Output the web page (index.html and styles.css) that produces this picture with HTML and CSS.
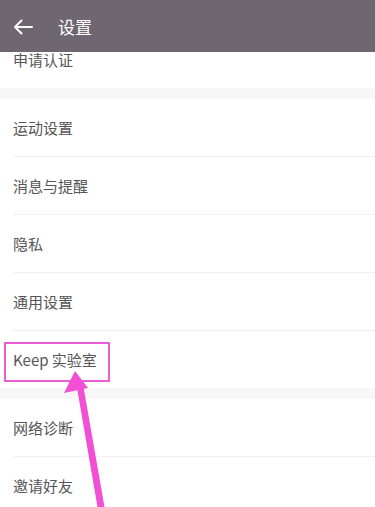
FILE: index.html
```html
<!DOCTYPE html>
<html lang="zh-CN">
<head>
  <meta charset="UTF-8">
  <title>设置</title>
  <link rel="stylesheet" href="styles.css">
</head>
<body>
  <!-- 顶部标题栏，盖在滚动列表上 -->
  <header class="topbar">
    <svg class="back" width="20" height="16" viewBox="0 0 20 16">
      <path d="M19 8H2M8.5 1.5L2 8l6.5 6.5" fill="none" stroke="#fff" stroke-width="2" stroke-linecap="round" stroke-linejoin="round"/>
    </svg>
    <span class="title">设置</span>
  </header>

  <main class="settings">
    <div class="group">
      <div class="row">申请认证</div>
    </div>
    <div class="group">
      <div class="row">运动设置</div>
      <div class="row">消息与提醒</div>
      <div class="row">隐私</div>
      <div class="row">通用设置</div>
      <div class="row">Keep 实验室<span class="mark"></span></div>
    </div>
    <div class="group">
      <div class="row">网络诊断</div>
      <div class="row">邀请好友</div>
    </div>
  </main>

  <!-- 标注箭头 -->
  <svg class="pointer" width="375" height="507" viewBox="0 0 375 507">
    <path d="M77 388 L83.5 387 L104.5 507 L97.5 507 Z" fill="#f24fd4"/>
    <path d="M75 371 L88 388 L64 393 Z" fill="#f24fd4"/>
  </svg>
</body>
</html>
```

FILE: styles.css
```css
body {
  margin: 0;
  background-color: #fff;
  font-family: "Noto Sans CJK SC", "Noto Sans", sans-serif;
  color: #555;
  overflow: hidden;
  height: 507px;
  position: relative;
}
.topbar {
  position: fixed;
  top: 0;
  left: 0;
  right: 0;
  height: 52px;
  background-color: #6e6771;
  display: flex;
  align-items: center;
  z-index: 2;
}
.back {
  margin-left: 13px;
  margin-top: 1px;
}
.title {
  margin-left: 25px;
  color: #fff;
  font-size: 17px;
}
.settings {
  padding-top: 31px;
}
.group {
  border-bottom: 11px solid #f7f7f7;
}
.group:last-child {
  border-bottom: none;
}
.row {
  height: 57px;
  padding-left: 13px;
  display: flex;
  align-items: center;
  font-size: 15px;
  position: relative;
}
/* 分隔线从文字左边缘开始 */
.row + .row {
  margin-top: 1px;
}
.row + .row::before {
  content: "";
  position: absolute;
  top: -1px;
  left: 13px;
  right: 0;
  height: 1px;
  background-color: #f0f0f0;
}
.mark {
  position: absolute;
  left: 4px;
  top: 11px;
  width: 102px;
  height: 36px;
  border: 2px solid #ea5cd6;
}
.pointer {
  position: absolute;
  top: 0;
  left: 0;
  z-index: 3;
}
```
